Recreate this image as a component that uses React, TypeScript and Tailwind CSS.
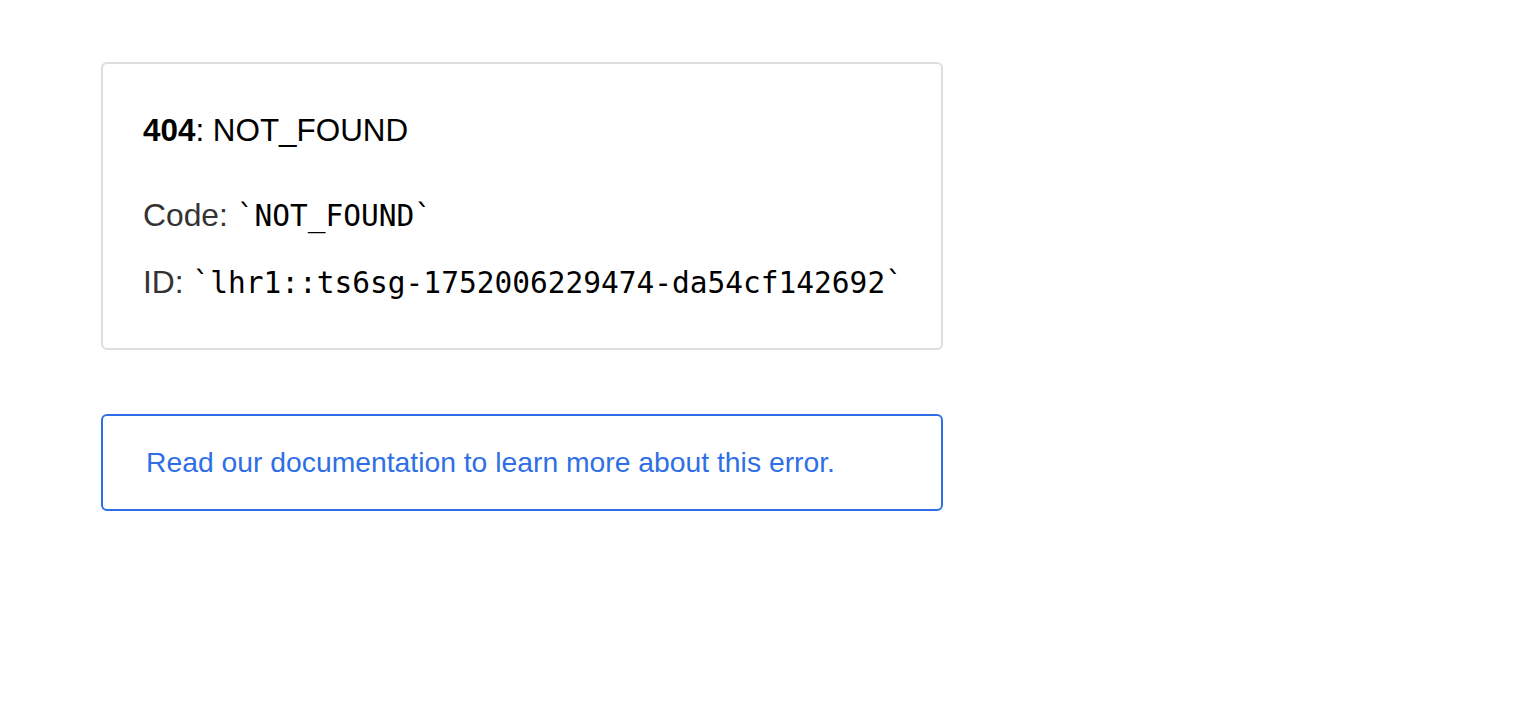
const sans = "font-['Liberation_Sans',Arial,sans-serif]";
const mono = "font-['DejaVu_Sans_Mono',Menlo,monospace]";

const App = () => {
  return (
    <div className={`min-h-screen bg-white ${sans}`}>
      <div className="w-[842px] ml-[101px] pt-[62px]">
        <div className="rounded-md border-2 border-[#dedede] pl-[40px] pt-[49px] pb-[45px]">
          <h1 className="text-[31.4px] leading-[36px] text-black">
            <span className="font-bold">404</span>: NOT_FOUND
          </h1>
          <p className="mt-[46px] text-[31.8px] leading-[40px] text-[#333]">
            Code: <code className={`${mono} text-[29.5px] text-black`}>`NOT_FOUND`</code>
          </p>
          <p className="mt-[26px] text-[31.8px] leading-[40px] text-[#333]">
            ID:{" "}
            <code className={`${mono} text-[29.5px] text-black`}>
              `lhr1::ts6sg-1752006229474-da54cf142692`
            </code>
          </p>
        </div>
        <a
          href="#"
          className="mt-[64px] flex h-[97px] items-center rounded-md border-2 border-[#2f6fe6] pl-[43px] text-[28.3px] text-[#2f6fe6]"
        >
          Read our documentation to learn more about this error.
        </a>
      </div>
    </div>
  );
};

export default App;
